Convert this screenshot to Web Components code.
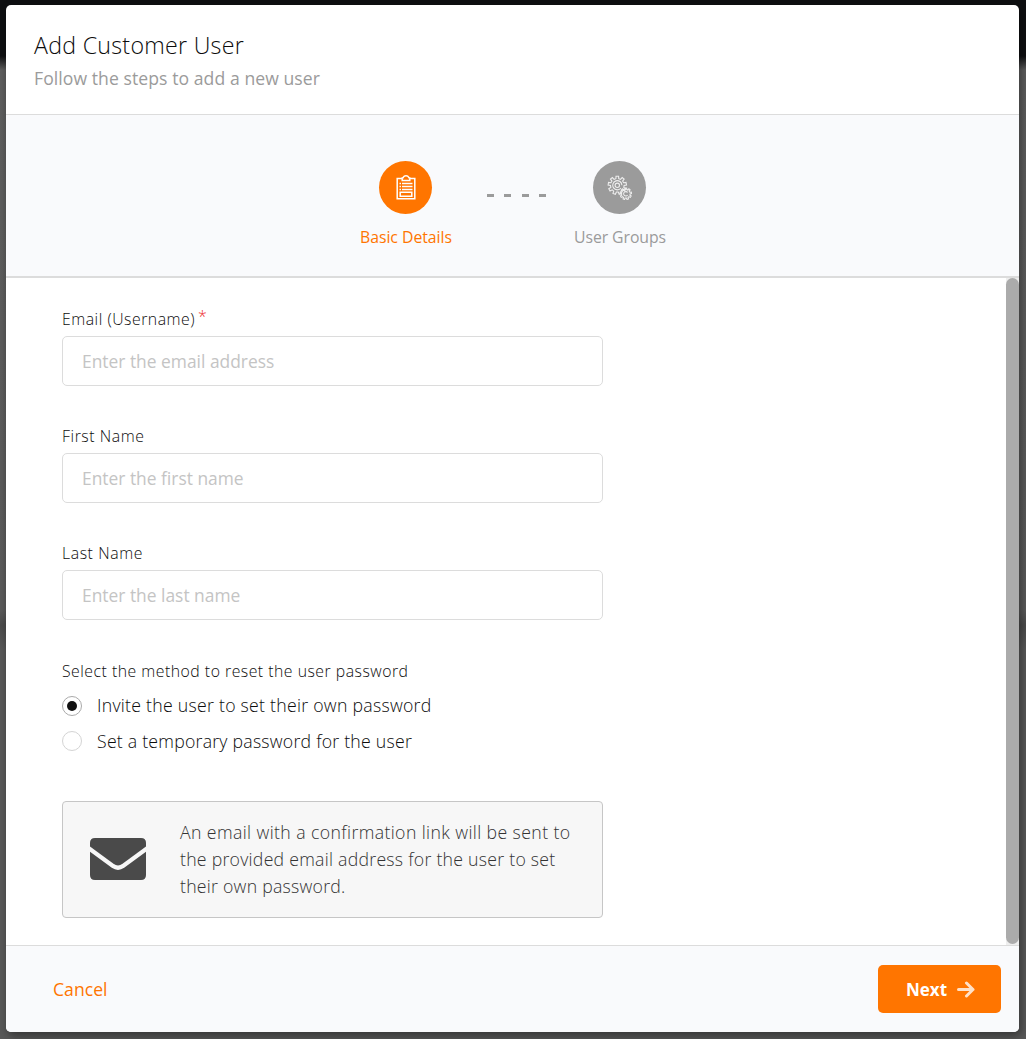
<!DOCTYPE html>
<html lang="en">
<head>
<meta charset="utf-8">
<title>Add Customer User</title>
<style>
html,body{margin:0;height:100%;overflow:hidden}
body{font-family:"Open Sans","Noto Sans",sans-serif;color:#0c0c0c;background:linear-gradient(#0e0f11 0,#0e0f11 56px,#5e5e5e 70px,#5a5a5a 610px,#4c4c4c 625px,#585858 650px,#585858 100%)}
</style>
</head>
<body>
<user-wizard></user-wizard>
<script>
const define = (name, html, setup) => {
  const t = document.createElement('template');
  t.innerHTML = html;
  customElements.define(name, class extends HTMLElement {
    constructor() {
      super();
      this.attachShadow({mode: 'open'}).append(t.content.cloneNode(true));
    }
    connectedCallback() { if (setup) setup(this, this.shadowRoot); }
  });
};

define('wizard-step', `
<style>
:host{display:flex;flex-direction:column;align-items:center;width:110px;color:#9b9b9b}
:host([active]){color:#ff7500}
.dot{width:53px;height:53px;border-radius:50%;background:currentColor;display:flex;align-items:center;justify-content:center}
.label{margin-top:10px;font-size:15.8px;line-height:26px;white-space:nowrap;padding-left:1px}
</style>
<div class="dot"><slot name="icon"></slot></div>
<div class="label"><slot></slot></div>`);

define('form-field', `
<style>
:host{display:block;height:117px}
.label{font-size:15.8px;line-height:24px;height:29px;white-space:nowrap}
.req{color:#e33;display:none;font-size:16px;position:relative;top:-3px;left:3px}
:host([required]) .req{display:inline}
input{display:block;box-sizing:border-box;width:541px;height:50px;border:1px solid #dcdcdc;border-radius:5px;padding:0 19px;margin:0;font:17.4px/24px "Open Sans","Noto Sans",sans-serif;background:#fff;outline:0}
input::placeholder{color:#c4c4c4;opacity:1}
</style>
<div class="label"><slot></slot><span class="req">*</span></div>
<input type="text">`, (el, r) => { r.querySelector('input').placeholder = el.getAttribute('placeholder'); });

define('radio-option', `
<style>
:host{display:flex;align-items:center;height:36px;font-size:17.700px;white-space:nowrap}
.ring{box-sizing:border-box;width:20px;height:20px;border:1px solid #d4d4d4;border-radius:50%;margin:0 15px 2px 0;display:flex;align-items:center;justify-content:center}
:host([checked]) .ring{border-color:#aaa;margin-bottom:0}
:host([checked]) .ring::before{content:"";width:10px;height:10px;border-radius:50%;background:#111}
.text{line-height:24px;padding-bottom:2px}
</style>
<span class="ring"></span><span class="text"><slot></slot></span>`);

define('info-note', `
<style>
:host{display:flex;align-items:center;box-sizing:border-box;width:541px;height:117px;border:1px solid #c6c6c6;border-radius:4px;background:#f7f7f7;padding-left:27px;color:#333}
svg{display:block;margin:0 34px 1px 0}
.text{font-size:17.700px;line-height:27px;white-space:nowrap}
</style>
<svg width="56" height="42" viewBox="0 0 56 42" fill="#4a4a4a"><path d="M5 0H51Q56 0 56 5V8.600L32.500 25.800Q28 29 23.500 25.800L0 8.600V5Q0 0 5 0Z"/><path d="M0 13.700L21.800 29.800Q28 34 34.200 29.800L56 13.700V37Q56 42 51 42H5Q0 42 0 37Z"/></svg>
<div class="text"><slot></slot></div>`);

define('next-button', `
<style>
:host{display:block}
button{display:flex;align-items:center;justify-content:center;gap:10px;width:123px;height:48px;border:0;border-radius:5px;background:#ff7500;color:#fff;font:700 17px/24px "Open Sans","Noto Sans",sans-serif;padding:0 0 0 2px}
span{padding-top:2px}
</style>
<button><span><slot></slot></span><svg width="18" height="17" viewBox="0 0 18 17" fill="none" stroke="#ffe1c8" stroke-width="3" stroke-linecap="round" stroke-linejoin="round"><path d="M1.500 8.500H16M9.500 2L16 8.500L9.500 15"/></svg></button>`);

/* Inline text tracked out to a given advance width. */
define('tracked-text', `
<style>:host{display:inline-block;white-space:nowrap}</style><slot></slot>`, el => {
  const gap = (Number(el.getAttribute('width')) - el.getBoundingClientRect().width) / el.textContent.length;
  el.style.letterSpacing = gap.toFixed(3) + 'px';
});

define('user-wizard', `
<style>
:host{display:block;box-sizing:border-box;padding:5px 7px 7px 6px;height:1039px}
.modal{display:flex;flex-direction:column;height:1027px;border-radius:5px;overflow:hidden;background:#fff;box-shadow:2px 4px 10px rgba(0,0,0,.4)}
header{box-sizing:border-box;height:110px;border-bottom:1px solid #dcdcdc;padding:24px 28px 0}
h1{margin:0;font-size:23.200px;line-height:32px;font-weight:350}
.sub{font-size:17.600px;line-height:26px;margin-top:4px;color:#9b9b9b}
.steps{box-sizing:border-box;height:163px;background:#f9fafc;border-bottom:2px solid #dcdcdc;display:flex;justify-content:center;padding-top:46px}
.dash{display:flex;justify-content:space-between;width:59px;margin:33px 18.500px 0 26.500px;height:3px}
.dash i{width:7px;height:3px;background:#9b9b9b}
.main{height:667px;display:flex;justify-content:space-between}
form{padding:29px 0 0 56px;font-weight:350}
.q{font-size:15.800px;line-height:24px;margin:1px 0 5px}
info-note{margin-top:41px}
.bar{width:13px;background:#eee}
.bar div{height:666px;border-radius:6.500px;background:#ababab}
footer{box-sizing:border-box;height:87px;border-top:1px solid #dcdcdc;background:#f9fafc;display:flex;align-items:center;justify-content:space-between;padding:0 18px 0 47px}
.cancel{color:#ff7500;font-size:17.600px}
</style>
<div class="modal">
<header><h1><tracked-text width="210">Add Customer User</tracked-text></h1><div class="sub"><tracked-text width="286">Follow the steps to add a new user</tracked-text></div></header>
<section class="steps">
<wizard-step active><svg slot="icon" width="20" height="25" viewBox="0 0 20 25" fill="none" stroke="#fff" stroke-width="1.500"><path d="M6 3.500H1.200V23.800H18.800V3.500H14M6.200 5.500V3Q7.200 3 7.500 2Q8 .8 10 .8T12.500 2Q12.800 3 13.800 3V5.500Z"/><path d="M3.500 8.500H5M3.500 11.500H5M3.500 14.500H5M6 8.500H16.500M6 11.500H16.500M6 14.500H16.500M4.200 17.300H15.800V21.300H4.200Z"/></svg><tracked-text width="92">Basic Details</tracked-text></wizard-step>
<div class="dash"><i></i><i></i><i></i><i></i></div>
<wizard-step><svg slot="icon" class="gears" width="25" height="25" viewBox="0 0 25 25" fill="none" stroke="#ededed" stroke-width="1.100"></svg><tracked-text width="92">User Groups</tracked-text></wizard-step>
</section>
<div class="main">
<form>
<form-field required placeholder="Enter the email address"><tracked-text width="133">Email (Username)</tracked-text></form-field>
<form-field placeholder="Enter the first name"><tracked-text width="82.500">First Name</tracked-text></form-field>
<form-field placeholder="Enter the last name"><tracked-text width="81">Last Name</tracked-text></form-field>
<div class="q"><tracked-text width="346.500">Select the method to reset the user password</tracked-text></div>
<radio-option checked><tracked-text width="334.500">Invite the user to set their own password</tracked-text></radio-option>
<radio-option><tracked-text width="315">Set a temporary password for the user</tracked-text></radio-option>
<info-note><tracked-text width="390.500">An email with a confirmation link will be sent to</tracked-text><br><tracked-text width="375.500">the provided email address for the user to set</tracked-text><br><tracked-text width="165.500">their own password.</tracked-text></info-note>
</form>
<div class="bar"><div></div></div>
</div>
<footer><span class="cancel"><tracked-text width="54.500">Cancel</tracked-text></span><next-button>Next</next-button></footer>
</div>`, (el, r) => {
  const gear = (cx, cy, ro, ri, n) => {
    let d = '';
    const p = (rad, a) => (cx + rad * Math.cos(a)).toFixed(2) + ' ' + (cy + rad * Math.sin(a)).toFixed(2);
    for (let k = 0; k < n; k++) {
      const a = (k / n) * 2 * Math.PI - Math.PI / 2, s = Math.PI / n;
      d += (k ? 'L' : 'M') + p(ri, a - s * .6) + 'L' + p(ro, a - s * .4) + 'L' + p(ro, a + s * .4) + 'L' + p(ri, a + s * .6);
    }
    return `<path d="${d}Z"/>`;
  };
  r.querySelector('.gears').innerHTML = gear(10.3, 10.3, 9.2, 6.8, 9) + '<path d="M14 13A4.600 4.600 0 1 1 14.900 10.300"/><circle cx="10.300" cy="10.300" r="2.200"/>' + gear(18.800, 18.800, 5.800, 4.300, 9) + '<path d="M20.600 20.100A2.200 2.200 0 1 1 20.600 17.500"/>';
});
</script>
</body>
</html>
